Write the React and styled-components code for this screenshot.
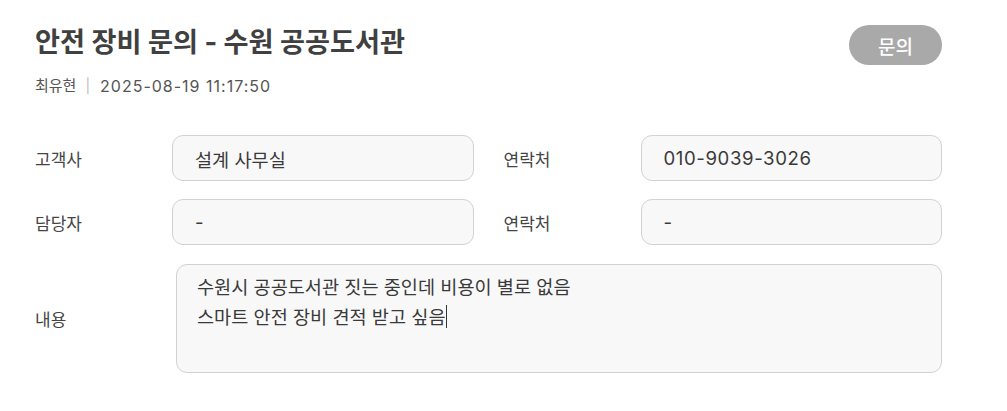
import React from "react";
import styled, { createGlobalStyle } from "styled-components";

const GlobalStyle = createGlobalStyle`
  html, body { margin: 0; padding: 0; background: #fff; }
  body { font-family: "Inter", "Noto Sans CJK KR", sans-serif; }
`;

const Page = styled.div`
  width: 1007px;
  box-sizing: border-box;
  padding: 23px 65px 0 35px;
  color: #444;
`;

const Header = styled.div`
  display: flex;
  justify-content: space-between;
  align-items: flex-start;
`;

const TitleBlock = styled.div`
  display: flex;
  flex-direction: column;
`;

const Title = styled.h1`
  margin: 0;
  font-size: 27.2px;
  line-height: 40px;
  font-weight: 700;
  color: #404040;
`;

const Meta = styled.div`
  display: flex;
  align-items: center;
  margin-top: 3px;
  font-size: 15px;
  line-height: 40px;
  color: #555;
`;

const Sep = styled.span`
  color: #bbb;
  margin: 0 10px 0 9px;
  font-size: 14px;
`;

const Stamp = styled.span`
  font-size: 16px;
  letter-spacing: 1px;
`;

const Badge = styled.span`
  display: inline-flex;
  align-items: center;
  justify-content: center;
  width: 93px;
  height: 40px;
  margin-top: 2px;
  border-radius: 20px;
  background: #a9a9a9;
  color: #fff;
  font-size: 19px;
  font-weight: 500;
`;

const Form = styled.div`
  display: flex;
  flex-direction: column;
  gap: 18px;
  margin-top: 29px;
`;

const Row = styled.div`
  display: flex;
  align-items: center;
  margin-top: ${(p) => p.$extra || 0}px;
`;

const Field = styled.div`
  display: flex;
  align-items: center;
  flex: 1;
  & + & { margin-left: 30px; }
`;

const Label = styled.div`
  flex: none;
  width: ${(p) => p.$w || 137}px;
  font-size: 17px;
  color: #444;
`;

const Box = styled.div`
  flex: 1;
  box-sizing: border-box;
  height: ${(p) => p.$h || 46}px;
  border: 1px solid #d2d2d2;
  border-radius: 11px;
  background: #f8f8f8;
  padding: ${(p) => (p.$multi ? "7px 20px" : "0 22px")};
  display: flex;
  align-items: ${(p) => (p.$multi ? "flex-start" : "center")};
  font-size: 18.6px;
  letter-spacing: ${(p) => p.$ls || 0}px;
  line-height: ${(p) => (p.$multi ? "30px" : "normal")};
  color: #3a3a3a;
`;

const Caret = styled.span`
  display: inline-block;
  width: 1px;
  height: 23px;
  background: #333;
  vertical-align: -4px;
`;

export default function App() {
  return (
    <>
      <GlobalStyle />
      <Page>
        <Header>
          <TitleBlock>
            <Title>안전 장비 문의 - 수원 공공도서관</Title>
            <Meta>
              최유현<Sep>|</Sep>
              <Stamp>2025-08-19 11:17:50</Stamp>
            </Meta>
          </TitleBlock>
          <Badge>문의</Badge>
        </Header>
        <Form>
          <Row>
            <Field>
              <Label>고객사</Label>
              <Box>설계 사무실</Box>
            </Field>
            <Field>
              <Label>연락처</Label>
              <Box $ls={0.6}>010-9039-3026</Box>
            </Field>
          </Row>
          <Row>
            <Field>
              <Label>담당자</Label>
              <Box>-</Box>
            </Field>
            <Field>
              <Label>연락처</Label>
              <Box>-</Box>
            </Field>
          </Row>
          <Row $extra={1}>
            <Field>
              <Label $w={141}>내용</Label>
              <Box $multi $h={109}>
                <div>
                  수원시 공공도서관 짓는 중인데 비용이 별로 없음
                  <br />
                  스마트 안전 장비 견적 받고 싶음<Caret />
                </div>
              </Box>
            </Field>
          </Row>
        </Form>
      </Page>
    </>
  );
}
